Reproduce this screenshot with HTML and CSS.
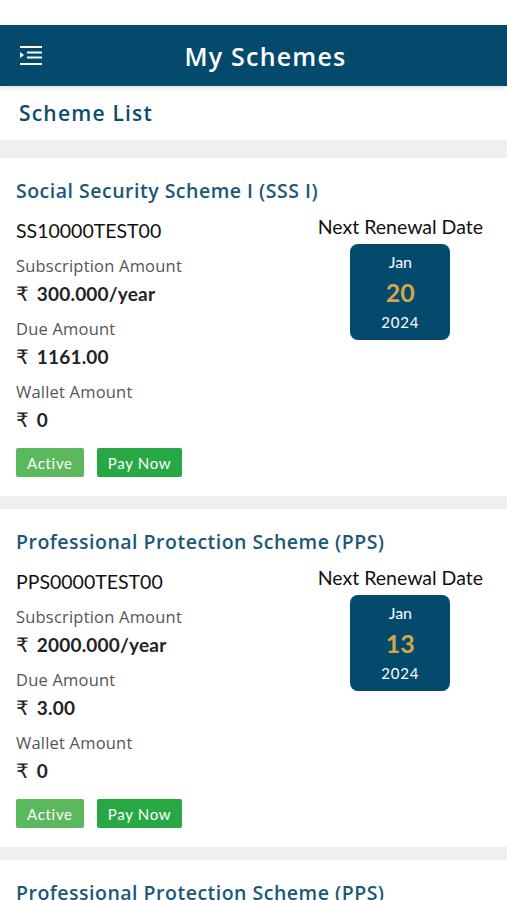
FILE: index.html
```html
<!DOCTYPE html>
<html lang="en">
<head>
    <meta charset="UTF-8">
    <meta name="viewport" content="width=device-width, initial-scale=1.0">
    <title>My Schemes</title>
    <link rel="stylesheet" href="styles.css">
</head>
<body>

<div class="status-bar"></div>

<header class="top-bar">
    <span class="menu-icon">
        <svg width="22" height="20" viewBox="0 0 22 20">
            <rect x="0" y="0" width="22" height="2" fill="#fff"/>
            <polygon points="0,6 4,9 0,12" fill="#fff"/>
            <rect x="7" y="5.5" width="15" height="2" fill="#fff"/>
            <rect x="7" y="10.5" width="15" height="2" fill="#fff"/>
            <rect x="0" y="17" width="22" height="2" fill="#fff"/>
        </svg>
    </span>
    <h1>My Schemes</h1>
</header>

<div class="page-title">Scheme List</div>

<div class="scheme-list">

    <!-- Scheme card -->
    <div class="scheme-card">
        <h2 class="scheme-name">Social Security Scheme I (SSS I)</h2>
        <div class="scheme-body">
            <div class="scheme-info">
                <div class="scheme-id">SS10000TEST00</div>
                <div class="info-label">Subscription Amount</div>
                <div class="info-value"><span class="rupee">₹</span> 300.000/year</div>
                <div class="info-label">Due Amount</div>
                <div class="info-value"><span class="rupee">₹</span> 1161.00</div>
                <div class="info-label">Wallet Amount</div>
                <div class="info-value"><span class="rupee">₹</span> 0</div>
                <div class="actions">
                    <span class="badge badge-active">Active</span>
                    <button class="btn-pay">Pay Now</button>
                </div>
            </div>
            <div class="renewal">
                <div class="renewal-label">Next Renewal Date</div>
                <div class="date-box">
                    <span class="month">Jan</span>
                    <span class="day">20</span>
                    <span class="year">2024</span>
                </div>
            </div>
        </div>
    </div>

    <div class="scheme-card">
        <h2 class="scheme-name">Professional Protection Scheme (PPS)</h2>
        <div class="scheme-body">
            <div class="scheme-info">
                <div class="scheme-id">PPS0000TEST00</div>
                <div class="info-label">Subscription Amount</div>
                <div class="info-value"><span class="rupee">₹</span> 2000.000/year</div>
                <div class="info-label">Due Amount</div>
                <div class="info-value"><span class="rupee">₹</span> 3.00</div>
                <div class="info-label">Wallet Amount</div>
                <div class="info-value"><span class="rupee">₹</span> 0</div>
                <div class="actions">
                    <span class="badge badge-active">Active</span>
                    <button class="btn-pay">Pay Now</button>
                </div>
            </div>
            <div class="renewal">
                <div class="renewal-label">Next Renewal Date</div>
                <div class="date-box">
                    <span class="month">Jan</span>
                    <span class="day">13</span>
                    <span class="year">2024</span>
                </div>
            </div>
        </div>
    </div>

    <div class="scheme-card">
        <h2 class="scheme-name">Professional Protection Scheme (PPS)</h2>
    </div>

</div>

</body>
</html>
```

FILE: styles.css
```css
body {
    margin: 0;
    padding: 0;
    font-family: Lato, "Open Sans", sans-serif;
    background: #efefef;
    color: #111;
}

.status-bar {
    height: 25px;
    background: #fff;
}

.top-bar {
    height: 61px;
    background: #044a6d;
    display: flex;
    align-items: center;
    position: relative;
    z-index: 2;
    box-shadow: 0 2px 4px rgba(0, 0, 0, 0.12);
}

.menu-icon {
    width: 22px;
    height: 20px;
    margin-left: 20px;
    display: flex;
}

.top-bar h1 {
    flex: 1;
    margin: 0 18px 0 0;
    text-align: center;
    color: #fff;
    font-family: "Open Sans", sans-serif;
    font-size: 25px;
    font-weight: 600;
    letter-spacing: 1.2px;
}

.page-title {
    height: 54px;
    background: #fff;
    padding-left: 19px;
    display: flex;
    align-items: center;
    font-family: "Open Sans", sans-serif;
    font-size: 21px;
    font-weight: 600;
    color: #0e4c6b;
    letter-spacing: 1.2px;
}

.scheme-list {
    padding-top: 18px;
    display: flex;
    flex-direction: column;
    gap: 13px;
}

.scheme-card {
    background: #fff;
    padding: 21px 24px 19px 16px;
}

.scheme-name {
    margin: 0;
    font-family: "Open Sans", sans-serif;
    font-size: 19.5px;
    line-height: 24px;
    font-weight: 600;
    color: #1a5878;
    letter-spacing: 0.5px;
}

.scheme-body {
    display: flex;
    justify-content: space-between;
    margin-top: 16px;
}

.scheme-id {
    font-size: 19.5px;
    line-height: 24px;
}

.info-label {
    margin-top: 11px;
    font-family: "Open Sans", sans-serif;
    font-size: 16.5px;
    line-height: 24px;
    color: #555;
    letter-spacing: 0.2px;
}

.info-value {
    margin-top: 4px;
    font-size: 19px;
    line-height: 24px;
    font-weight: bold;
    color: #222;
    letter-spacing: 0.2px;
}

.rupee {
    font-family: "DejaVu Sans", sans-serif;
    font-size: 20px;
    font-weight: normal;
    margin-right: 3px;
}

.actions {
    display: flex;
    gap: 13px;
    margin-top: 16px;
}

.badge,
.btn-pay {
    height: 29px;
    padding: 0 11px;
    display: flex;
    align-items: center;
    border-radius: 2px;
    color: #fff;
    font-family: Lato, sans-serif;
    font-size: 15px;
    letter-spacing: 0.7px;
}

.badge-active {
    background: #5cb85c;
}

.btn-pay {
    border: none;
    background: #28a745;
}

.renewal {
    display: flex;
    flex-direction: column;
    align-items: center;
    margin-top: -4px;
}

.renewal-label {
    font-size: 19.5px;
    line-height: 24px;
}

.date-box {
    width: 100px;
    height: 96px;
    margin-top: 5px;
    border-radius: 8px;
    background: #044a6d;
    color: #fff;
    display: flex;
    flex-direction: column;
    align-items: center;
    justify-content: center;
}

.month {
    font-size: 16px;
    line-height: 24px;
}

.day {
    font-size: 25px;
    line-height: 36px;
    font-weight: bold;
    color: #d5a54b;
}

.year {
    font-size: 15px;
    line-height: 24px;
    letter-spacing: 0.8px;
}
```
